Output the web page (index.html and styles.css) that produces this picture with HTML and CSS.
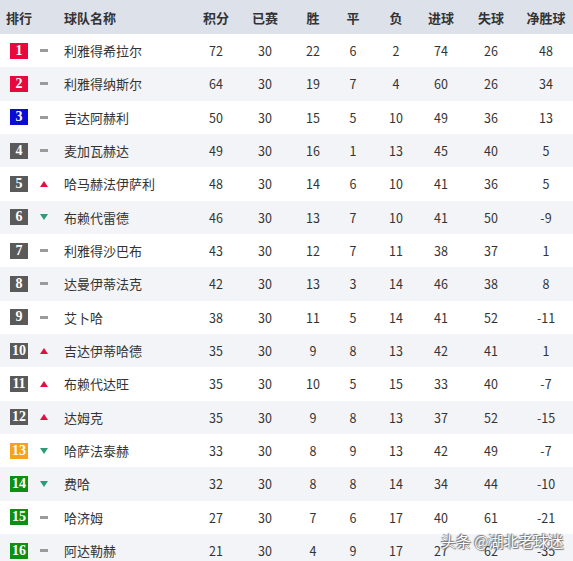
FILE: index.html
```html
<!DOCTYPE html>
<html lang="zh">
<head>
<meta charset="utf-8">
<link rel="stylesheet" href="styles.css">
</head>
<body>
<div class="table">
  <div class="row head">
    <div class="c-rank">排行</div><div class="c-trend"></div><div class="c-name">球队名称</div>
    <div class="c-n n1">积分</div><div class="c-n n2">已赛</div><div class="c-n n3">胜</div><div class="c-n n4">平</div><div class="c-n n5">负</div><div class="c-n n6">进球</div><div class="c-n n7">失球</div><div class="c-n n8">净胜球</div>
  </div>
  <div class="row"><div class="c-rank"><span class="badge red">1</span></div><div class="c-trend"><span class="dash"></span></div><div class="c-name">利雅得希拉尔</div><div class="c-n">72</div><div class="c-n">30</div><div class="c-n">22</div><div class="c-n">6</div><div class="c-n">2</div><div class="c-n">74</div><div class="c-n">26</div><div class="c-n">48</div></div>
  <div class="row alt"><div class="c-rank"><span class="badge red">2</span></div><div class="c-trend"><span class="dash"></span></div><div class="c-name">利雅得纳斯尔</div><div class="c-n">64</div><div class="c-n">30</div><div class="c-n">19</div><div class="c-n">7</div><div class="c-n">4</div><div class="c-n">60</div><div class="c-n">26</div><div class="c-n">34</div></div>
  <div class="row"><div class="c-rank"><span class="badge blue">3</span></div><div class="c-trend"><span class="dash"></span></div><div class="c-name">吉达阿赫利</div><div class="c-n">50</div><div class="c-n">30</div><div class="c-n">15</div><div class="c-n">5</div><div class="c-n">10</div><div class="c-n">49</div><div class="c-n">36</div><div class="c-n">13</div></div>
  <div class="row alt"><div class="c-rank"><span class="badge gray">4</span></div><div class="c-trend"><span class="dash"></span></div><div class="c-name">麦加瓦赫达</div><div class="c-n">49</div><div class="c-n">30</div><div class="c-n">16</div><div class="c-n">1</div><div class="c-n">13</div><div class="c-n">45</div><div class="c-n">40</div><div class="c-n">5</div></div>
  <div class="row"><div class="c-rank"><span class="badge gray">5</span></div><div class="c-trend"><span class="up"></span></div><div class="c-name">哈马赫法伊萨利</div><div class="c-n">48</div><div class="c-n">30</div><div class="c-n">14</div><div class="c-n">6</div><div class="c-n">10</div><div class="c-n">41</div><div class="c-n">36</div><div class="c-n">5</div></div>
  <div class="row alt"><div class="c-rank"><span class="badge gray">6</span></div><div class="c-trend"><span class="down"></span></div><div class="c-name">布赖代雷德</div><div class="c-n">46</div><div class="c-n">30</div><div class="c-n">13</div><div class="c-n">7</div><div class="c-n">10</div><div class="c-n">41</div><div class="c-n">50</div><div class="c-n">-9</div></div>
  <div class="row"><div class="c-rank"><span class="badge gray">7</span></div><div class="c-trend"><span class="dash"></span></div><div class="c-name">利雅得沙巴布</div><div class="c-n">43</div><div class="c-n">30</div><div class="c-n">12</div><div class="c-n">7</div><div class="c-n">11</div><div class="c-n">38</div><div class="c-n">37</div><div class="c-n">1</div></div>
  <div class="row alt"><div class="c-rank"><span class="badge gray">8</span></div><div class="c-trend"><span class="dash"></span></div><div class="c-name">达曼伊蒂法克</div><div class="c-n">42</div><div class="c-n">30</div><div class="c-n">13</div><div class="c-n">3</div><div class="c-n">14</div><div class="c-n">46</div><div class="c-n">38</div><div class="c-n">8</div></div>
  <div class="row"><div class="c-rank"><span class="badge gray">9</span></div><div class="c-trend"><span class="dash"></span></div><div class="c-name">艾卜哈</div><div class="c-n">38</div><div class="c-n">30</div><div class="c-n">11</div><div class="c-n">5</div><div class="c-n">14</div><div class="c-n">41</div><div class="c-n">52</div><div class="c-n">-11</div></div>
  <div class="row alt"><div class="c-rank"><span class="badge gray">10</span></div><div class="c-trend"><span class="up"></span></div><div class="c-name">吉达伊蒂哈德</div><div class="c-n">35</div><div class="c-n">30</div><div class="c-n">9</div><div class="c-n">8</div><div class="c-n">13</div><div class="c-n">42</div><div class="c-n">41</div><div class="c-n">1</div></div>
  <div class="row"><div class="c-rank"><span class="badge gray">11</span></div><div class="c-trend"><span class="up"></span></div><div class="c-name">布赖代达旺</div><div class="c-n">35</div><div class="c-n">30</div><div class="c-n">10</div><div class="c-n">5</div><div class="c-n">15</div><div class="c-n">33</div><div class="c-n">40</div><div class="c-n">-7</div></div>
  <div class="row alt"><div class="c-rank"><span class="badge gray">12</span></div><div class="c-trend"><span class="up"></span></div><div class="c-name">达姆克</div><div class="c-n">35</div><div class="c-n">30</div><div class="c-n">9</div><div class="c-n">8</div><div class="c-n">13</div><div class="c-n">37</div><div class="c-n">52</div><div class="c-n">-15</div></div>
  <div class="row"><div class="c-rank"><span class="badge orange">13</span></div><div class="c-trend"><span class="down"></span></div><div class="c-name">哈萨法泰赫</div><div class="c-n">33</div><div class="c-n">30</div><div class="c-n">8</div><div class="c-n">9</div><div class="c-n">13</div><div class="c-n">42</div><div class="c-n">49</div><div class="c-n">-7</div></div>
  <div class="row alt"><div class="c-rank"><span class="badge green">14</span></div><div class="c-trend"><span class="down"></span></div><div class="c-name">费哈</div><div class="c-n">32</div><div class="c-n">30</div><div class="c-n">8</div><div class="c-n">8</div><div class="c-n">14</div><div class="c-n">34</div><div class="c-n">44</div><div class="c-n">-10</div></div>
  <div class="row"><div class="c-rank"><span class="badge green">15</span></div><div class="c-trend"><span class="dash"></span></div><div class="c-name">哈济姆</div><div class="c-n">27</div><div class="c-n">30</div><div class="c-n">7</div><div class="c-n">6</div><div class="c-n">17</div><div class="c-n">40</div><div class="c-n">61</div><div class="c-n">-21</div></div>
  <div class="row alt"><div class="c-rank"><span class="badge green">16</span></div><div class="c-trend"><span class="dash"></span></div><div class="c-name">阿达勒赫</div><div class="c-n">21</div><div class="c-n">30</div><div class="c-n">4</div><div class="c-n">9</div><div class="c-n">17</div><div class="c-n">27</div><div class="c-n">62</div><div class="c-n">-35</div></div>
</div>
<div class="watermark">头条 @湖北老球迷</div>
</body>
</html>
```

FILE: styles.css
```css
html, body {
  margin: 0;
  padding: 0;
  background: #ffffff;
  overflow: hidden;
}
body {
  width: 573px;
  height: 561px;
  position: relative;
  font-family: "Noto Sans CJK SC", "Noto Sans", sans-serif;
  color: #333333;
}
.table {
  display: flex;
  flex-direction: column;
}
.row {
  display: grid;
  grid-template-columns: 38px 12px 142px 48px 50px 46px 34px 52px 38px 62px 48px 3px;
  align-items: center;
  height: 33.33px;
  background: #ffffff;
  font-size: 12.5px;
}
.row.alt {
  background: #f3f4f8;
}
.row.head {
  height: 34px;
  background: #dde1ea;
  font-weight: bold;
  font-size: 13px;
  color: #333333;
}
.c-rank {
  display: flex;
  justify-content: center;
}
.c-trend {
  display: flex;
  justify-content: center;
  align-items: center;
}
.c-name {
  padding-left: 14px;
  font-size: 13px;
  white-space: nowrap;
}
.c-n {
  text-align: center;
}
.badge {
  width: 18px;
  height: 16px;
  display: flex;
  align-items: center;
  justify-content: center;
  color: #ffffff;
  font-family: "Liberation Serif", serif;
  font-weight: bold;
  font-size: 14px;
  line-height: 16px;
}
.badge.red { background: #e8083e; }
.badge.blue { background: #0b0bd6; }
.badge.gray { background: #5a5a5a; }
.badge.orange { background: #f5a21c; }
.badge.green { background: #0f8f12; }
.dash {
  width: 8px;
  height: 3px;
  background: #9a9a9a;
}
.up {
  width: 0;
  height: 0;
  border-left: 4px solid transparent;
  border-right: 4px solid transparent;
  border-bottom: 6px solid #e0103f;
}
.down {
  width: 0;
  height: 0;
  border-left: 4px solid transparent;
  border-right: 4px solid transparent;
  border-top: 6px solid #2e9a78;
}
.watermark {
  position: absolute;
  left: 441px;
  top: 530px;
  font-size: 15px;
  color: #ffffff;
  white-space: nowrap;
  text-shadow: 0 0 1px #555, 1px 1px 1px #777, -1px -1px 1px #777;
}
```
